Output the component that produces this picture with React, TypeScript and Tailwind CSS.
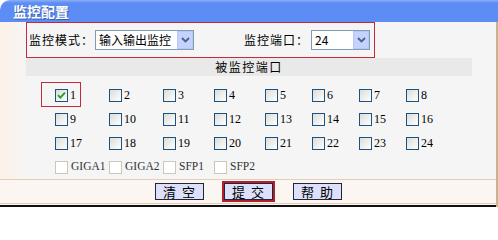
import React from 'react';

const cjk = '"Noto Sans CJK SC", "Liberation Sans", sans-serif';
const serif = '"Liberation Serif", "Noto Sans CJK SC", serif';

const colWidths = ['w-[54px]', 'w-[54px]', 'w-[51px]', 'w-[51px]', 'w-[47px]', 'w-[47px]', 'w-[47px]', 'w-[50px]'];

const portRows = [
  ['1', '2', '3', '4', '5', '6', '7', '8'],
  ['9', '10', '11', '12', '13', '14', '15', '16'],
  ['17', '18', '19', '20', '21', '22', '23', '24'],
];

const extraPorts = ['GIGA1', 'GIGA2', 'SFP1', 'SFP2'];

function Checkbox({ checked = false, disabled = false }: { checked?: boolean; disabled?: boolean }) {
  return (
    <span
      className={
        disabled
          ? 'w-[13px] h-[13px] shrink-0 border border-[#cac8bb] bg-white'
          : 'w-[13px] h-[13px] shrink-0 border border-[#1c5180] bg-gradient-to-br from-[#dcdcd7] to-white flex items-center justify-center'
      }
    >
      {checked && (
        <svg width="9" height="9" viewBox="0 0 9 9" aria-hidden="true">
          <path d="M1 4.2l2.3 2.4L8 1.6" fill="none" stroke="#21a121" strokeWidth="1.9" />
        </svg>
      )}
    </span>
  );
}

function Select({ value, width }: { value: string; width: string }) {
  return (
    <div className={`${width} h-[20px] border border-[#7f9db9] bg-white flex items-center justify-between`}>
      <span className="pl-[3px] text-[12px] text-black" style={{ fontFamily: cjk }}>
        {value}
      </span>
      <span className="w-[16px] h-[18px] bg-[#c3d3fd] border border-[#b6c8f4] flex items-center justify-center">
        <svg width="9" height="6" viewBox="0 0 9 6" aria-hidden="true">
          <path d="M1 1l3.5 3.5L8 1" fill="none" stroke="#4d6185" strokeWidth="1.8" />
        </svg>
      </span>
    </div>
  );
}

function Button({ label }: { label: string }) {
  return (
    <button
      className="w-[49px] h-[17px] bg-[#dde0fb] border border-[#23233a] text-[13px] leading-none text-black tracking-[6px] pl-[6px] flex items-center justify-center"
      style={{ fontFamily: cjk }}
    >
      {label}
    </button>
  );
}

export default function App() {
  return (
    <div className="w-[498px] h-[207px] bg-white overflow-hidden flex flex-col" style={{ fontFamily: cjk }}>
      {/* title bar */}
      <div className="h-[22px] shrink-0 rounded-tl-[10px] bg-[linear-gradient(#8eaef6_0,#5b8df4_3px)] pl-[13px] flex items-center">
        <span className="text-[14px] font-bold text-white leading-none [text-shadow:1px_1px_0_#3d5fa8]">
          监控配置
        </span>
      </div>

      <div className="flex-1 flex flex-col border-r-2 border-[#c8b48c] bg-[linear-gradient(to_right,#fcf2e9,#f5f5f5_28px)]">
        {/* mode / port selectors */}
        <div className="h-[36px] shrink-0 pl-[26px] flex">
          <div className="w-[349px] border border-[#c8283c] flex items-center pl-[2px] text-[12px] text-black">
            <span className="tracking-[1px] w-[66px]">监控模式：</span>
            <Select value="输入输出监控" width="w-[99px]" />
            <span className="tracking-[1px] ml-[50px] w-[67px]">监控端口：</span>
            <Select value="24" width="w-[59px]" />
          </div>
        </div>

        {/* section band */}
        <div className="h-[18px] shrink-0 ml-[26px] w-[446px] bg-[#e9e9e9] flex items-center justify-center text-[12px] tracking-[1.5px] text-black">
          被监控端口
        </div>

        {/* port grid */}
        <div className="relative pt-[7px] pl-[55px] flex flex-col">
          <div className="absolute left-[41px] top-[6px] w-[40px] h-[25px] border border-[#c8283c]" />
          {portRows.map((row) => (
            <div key={row[0]} className="h-[24px] flex items-center">
              {row.map((p, i) => (
                <div key={p} className={`${colWidths[i]} flex items-center`}>
                  <Checkbox checked={p === '1'} />
                  <span className="ml-[2px] text-[12px] text-black leading-none" style={{ fontFamily: serif }}>
                    {p}
                  </span>
                </div>
              ))}
            </div>
          ))}
          <div className="h-[24px] flex items-center">
            {extraPorts.map((p, i) => (
              <div key={p} className={`${colWidths[i]} flex items-center`}>
                <Checkbox disabled />
                <span className="ml-[3px] text-[11.5px] text-[#333] leading-none" style={{ fontFamily: serif }}>
                  {p}
                </span>
              </div>
            ))}
          </div>
        </div>

        {/* buttons */}
        <div className="mt-auto shrink-0 h-[25px] border-t border-b border-t-[#e6cdb4] border-b-[#e0cdb8] bg-[#fbf6f1] flex items-center justify-center gap-[18px]">
          <Button label="清空" />
          <div className="border-2 border-[#b0202c]">
            <Button label="提交" />
          </div>
          <Button label="帮助" />
        </div>
        <div className="h-[1px] shrink-0 bg-[#fbf6f1]" />
        <div className="h-[2px] shrink-0 bg-[#111]" />
      </div>
    </div>
  );
}
